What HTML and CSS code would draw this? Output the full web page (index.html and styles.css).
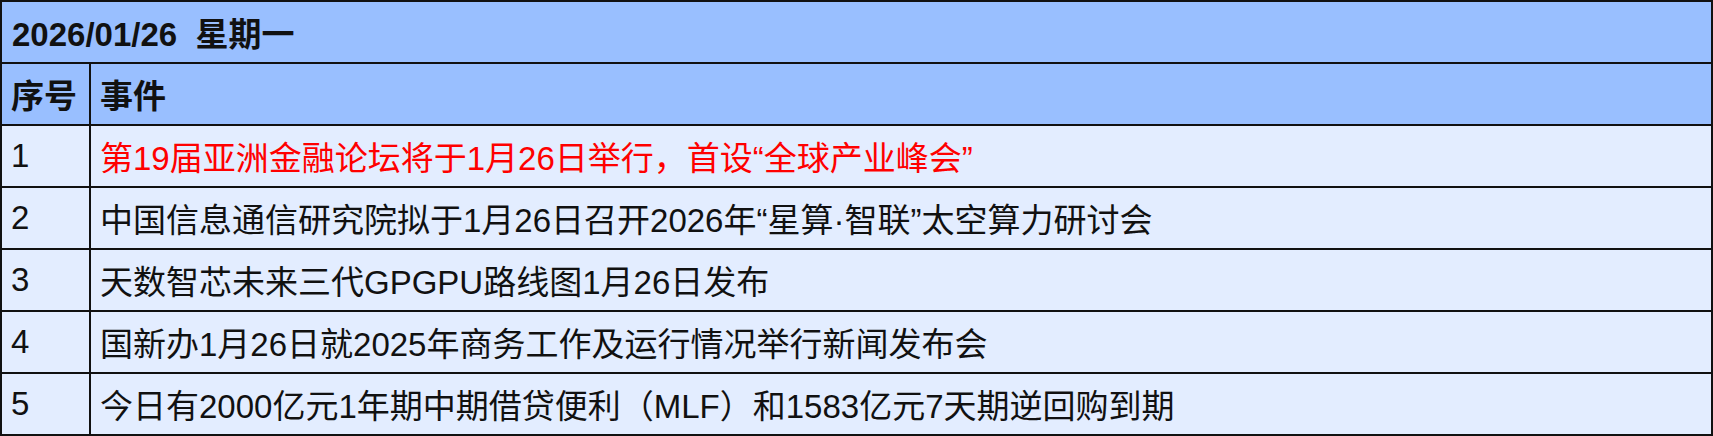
FILE: index.html
```html
<!DOCTYPE html>
<html lang="zh-CN">
<head>
<meta charset="utf-8">
<link rel="stylesheet" href="styles.css">
</head>
<body>
<div class="table">
  <div class="row title"><div class="cell full">2026/01/26&nbsp;&nbsp;星期一</div></div>
  <div class="row head"><div class="cell num">序号</div><div class="cell text">事件</div></div>
  <div class="row"><div class="cell num">1</div><div class="cell text red">第19届亚洲金融论坛将于1月26日举行，首设“全球产业峰会”</div></div>
  <div class="row"><div class="cell num">2</div><div class="cell text">中国信息通信研究院拟于1月26日召开2026年“星算·智联”太空算力研讨会</div></div>
  <div class="row"><div class="cell num">3</div><div class="cell text">天数智芯未来三代GPGPU路线图1月26日发布</div></div>
  <div class="row"><div class="cell num">4</div><div class="cell text">国新办1月26日就2025年商务工作及运行情况举行新闻发布会</div></div>
  <div class="row"><div class="cell num">5</div><div class="cell text">今日有2000亿元1年期中期借贷便利（MLF）和1583亿元7天期逆回购到期</div></div>
</div>
</body>
</html>
```

FILE: styles.css
```css
html, body {
  margin: 0;
  padding: 0;
  background: #ffffff;
}
.table {
  width: 1713px;
  height: 436px;
  box-sizing: border-box;
  border: 2px solid #111;
  border-bottom: none;
  font-family: "Liberation Sans", "Noto Sans CJK SC", sans-serif;
  font-size: 33px;
  color: #111;
}
.row {
  display: flex;
  height: 62px;
  box-sizing: border-box;
  border-bottom: 2px solid #111;
  background: #e3edff;
}
.title, .head {
  background: #99bfff;
  font-weight: bold;
}
.cell {
  display: flex;
  align-items: center;
  box-sizing: border-box;
  white-space: nowrap;
}
.full {
  flex: 1;
  padding-left: 10px;
}
.num {
  width: 89px;
  border-right: 2px solid #111;
  padding-left: 9px;
}
.text {
  flex: 1;
  padding-left: 9px;
}
.red {
  color: #ff0000;
}
```
